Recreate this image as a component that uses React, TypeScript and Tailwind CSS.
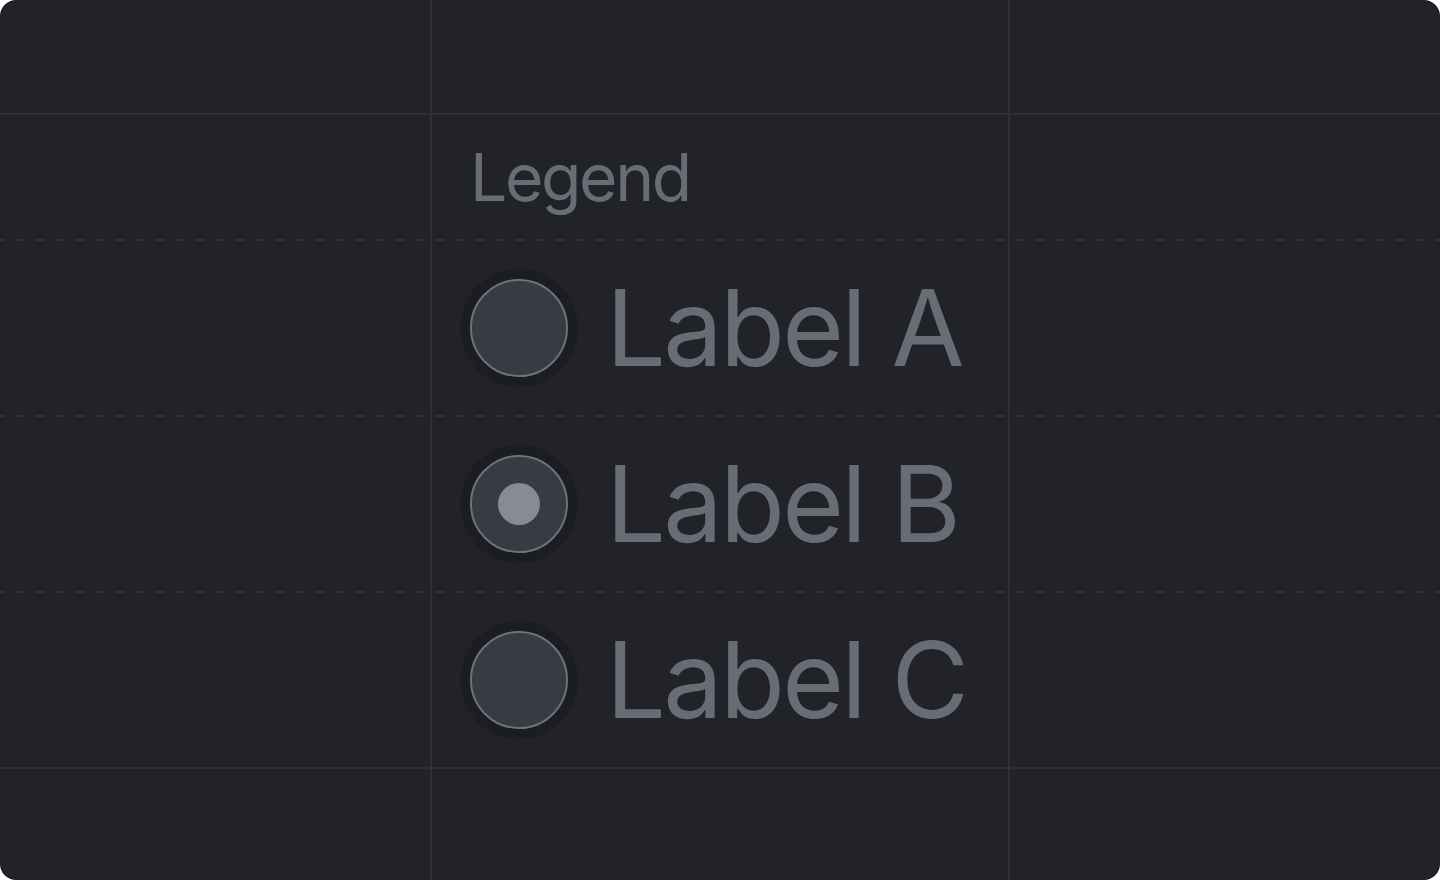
import React from "react";

const options = [
  { id: "a", label: "Label A", checked: false },
  { id: "b", label: "Label B", checked: true },
  { id: "c", label: "Label C", checked: false },
];

const dashed =
  "col-span-5 col-start-1 bg-[linear-gradient(to_right,#303238_50%,transparent_50%)] bg-[length:20px_2px] bg-[position:15px_0] bg-repeat-x";
const solid = "col-span-5 col-start-1 bg-[#2e3036]";

function Radio({ checked }: { checked: boolean }) {
  return (
    <span className="flex h-[98px] w-[98px] shrink-0 items-center justify-center rounded-full border-2 border-[#6e727b] bg-[#373b44] shadow-[0_0_0_10px_#1c1d21]">
      {checked && <span className="h-[42px] w-[42px] rounded-full bg-[#888b94]" />}
    </span>
  );
}

export default function App() {
  return (
    <div className="h-[880px] w-[1440px] bg-white">
      <div className="grid h-full w-full grid-cols-[430px_2px_576px_2px_1fr] grid-rows-[113px_2px_124px_2px_174px_2px_174px_2px_174px_2px_1fr] overflow-hidden rounded-2xl bg-[#222328] font-['Inter',sans-serif]">
        {/* column guides */}
        <div className="col-start-2 row-span-full row-start-1 bg-[#2e3036]" />
        <div className="col-start-4 row-span-full row-start-1 bg-[#2e3036]" />

        <div className={solid + " row-start-2"} />

        <fieldset className="contents">
          <div className="col-start-3 row-start-3 flex items-center pl-[38px]">
            <legend className="text-[66px] leading-none tracking-[-2.4px] text-[#686c75]">Legend</legend>
          </div>
          <div className={dashed + " row-start-4"} />

          {options.map((opt, i) => (
            <React.Fragment key={opt.id}>
              <label
                className={
                  "col-start-3 flex cursor-pointer items-center gap-[38px] pl-[38px] " +
                  (i === 0 ? "row-start-5" : i === 1 ? "row-start-7" : "row-start-9")
                }
              >
                <Radio checked={opt.checked} />
                <span className="text-[106px] leading-none tracking-[-2.7px] text-[#686c75]">
                  {opt.label}
                </span>
              </label>
              {i === 0 && <div className={dashed + " row-start-6"} />}
              {i === 1 && <div className={dashed + " row-start-8"} />}
              {i === 2 && <div className={solid + " row-start-10"} />}
            </React.Fragment>
          ))}
        </fieldset>
      </div>
    </div>
  );
}
